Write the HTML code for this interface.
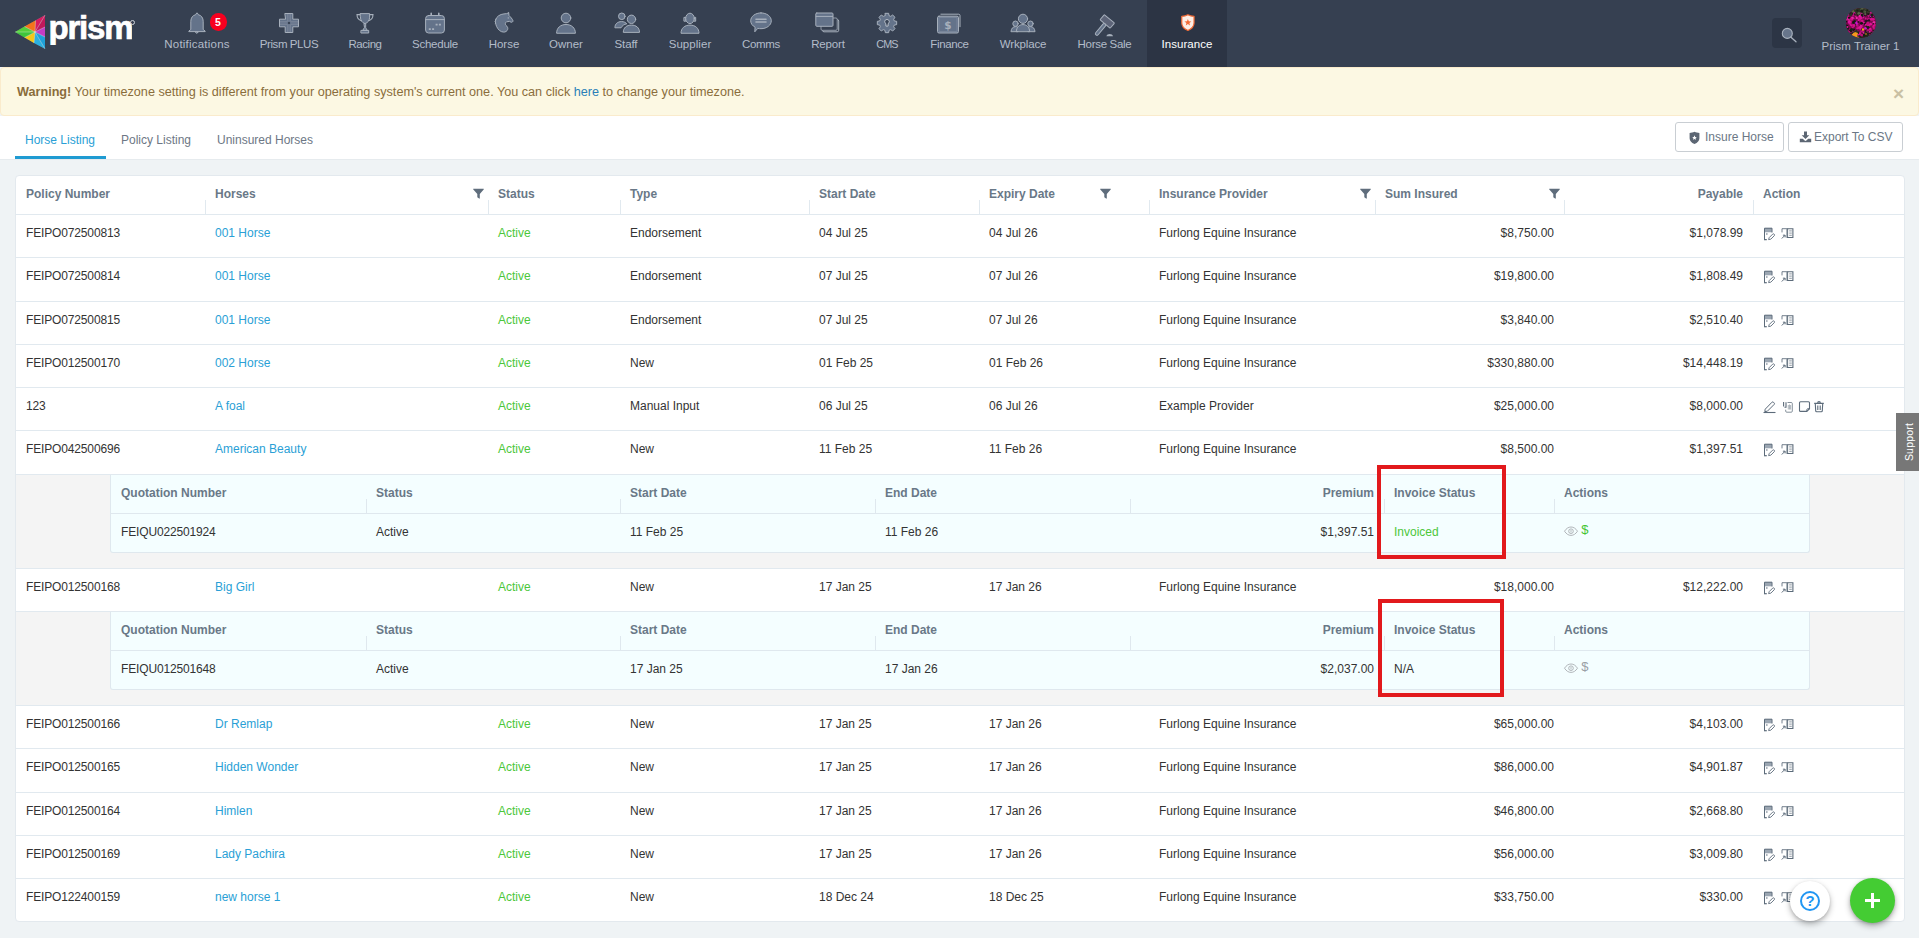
<!DOCTYPE html>
<html lang="en"><head><meta charset="utf-8"><title>Prism - Insurance</title>
<style>
*{box-sizing:border-box;margin:0;padding:0}
html,body{width:1919px;height:938px;overflow:hidden;background:#eff3f5}
body{font-family:"Liberation Sans",Arial,sans-serif;font-size:12px;color:#333;position:relative}
a{text-decoration:none;color:inherit}
.abs{position:absolute}
#nav{position:absolute;left:0;top:0;width:1919px;height:67px;background:#364051}
#nav .item{position:absolute;top:0;height:67px;text-align:center;color:#b3bcc9;font-size:11.5px;white-space:nowrap}
#nav .item .lbl{position:absolute;left:-50px;right:-50px;top:36px;line-height:16px;text-align:center}
#nav .item svg{position:absolute}
#nav .active{background:#2c3444;color:#fff}
#alert{position:absolute;left:0;top:67px;width:1919px;height:49px;background:#fcf8e3;border:1px solid #faebcc;border-radius:4px;color:#8a6d3b;font-size:12.65px}
#alert .txt{position:absolute;left:16px;top:15px;line-height:18px;white-space:nowrap}
#alert b{font-weight:bold}
#alert .lnk{color:#2a7fb8}
#tabs{position:absolute;left:0;top:116px;width:1919px;height:44px;background:#fff;border-bottom:1px solid #e6ebee}
.tab{position:absolute;top:0;height:43px;font-size:12px;color:#6d7785;white-space:nowrap;line-height:17px;padding-top:16px}
.tab.on{color:#2a9fd6}
.tab.on:after{content:"";position:absolute;left:-10px;right:-11px;bottom:0;height:3px;background:#1f9bd2}
.btn{position:absolute;top:6px;height:30px;border:1px solid #c9ced3;border-radius:3px;background:#fff;color:#6b7785;font-size:12px;line-height:17px;white-space:nowrap}
.btn .bl{position:absolute;top:6px}
#card{position:absolute;left:15px;top:175px;width:1890px;height:747px;background:#fff;border:1px solid #e3e9ee;border-radius:4px;overflow:hidden}
.row{position:absolute;left:0;width:1888px;border-top:1px solid #e1e9ef}
.c{position:absolute;top:0;white-space:nowrap;line-height:17px}
.row .c{padding-top:10px}
.hd .c{padding-top:11px;font-weight:bold;color:#697887}
.r{text-align:right}
.pn{letter-spacing:-.15px}
.lk{color:#2a9fd6}
.gr{color:#4cc73a}
.vd{position:absolute;width:1px;background:#e1e9ef}
.detail{position:absolute;left:0;width:1888px;background:#f4f4f4;border-top:1px solid #e1e9ef}
.inner{position:absolute;left:94px;top:0;width:1700px;height:78px;background:#f4feff;border:1px solid #dfe8ee;border-top:none;border-radius:0 0 3px 3px}
.inner .ih{position:absolute;left:0;top:0;width:1698px;height:39px;border-bottom:1px solid #dfe8ee}
.inner .c{padding-top:0}
.inner .ih .c{font-weight:bold;color:#697887;top:10px}
.inner .ir .c{top:49px}
.red{position:absolute;border:4px solid #e2191c}
.ico{position:absolute}
</style></head>
<body>
<div id="nav">
<svg class="abs" style="left:13px;top:13px" width="36" height="38" viewBox="0 0 36 38">
<polygon points="2,19 32,2 32,36" fill="#fff" opacity=".25"/>
<polygon points="22,19 32,2.200 22.500,7.500" fill="#d81b60"/>
<polygon points="22,19 32,2.200 32,14" fill="#c2185b"/>
<polygon points="22,19 32,14 32,24" fill="#c43cc4"/>
<polygon points="22,19 32,24 32,35.800" fill="#1ea0d8"/>
<polygon points="22,19 32,35.800 21,30" fill="#2bb0e0"/>
<polygon points="22,19 21,30 11.500,24.500" fill="#f4c81a"/>
<polygon points="22,19 11.500,24.500 2.200,19" fill="#3fc53a"/>
<polygon points="22,19 2.200,19 11.500,13.500" fill="#55cf3a"/>
<polygon points="22,19 11.500,13.500 22.500,7.500" fill="#f4731c"/>
<path d="M22 19L32 2.200M22 19L32 14M22 19L32 24M22 19L32 35.800M22 19L21 30M22 19L11.500 24.500M22 19L2.200 19M22 19L11.500 13.500M22 19L22.500 7.500" stroke="#fff" stroke-opacity=".55" stroke-width=".6"/>
</svg>
<div class="abs" style="left:48.5px;top:6px;height:39px;overflow:hidden;font-size:33px;line-height:43px;font-weight:bold;color:#fff;letter-spacing:-1.200px;-webkit-text-stroke:.7px #fff;white-space:nowrap">prism</div>
<div class="abs" style="left:130px;top:19.5px;width:5px;height:5px;border:1px solid #cfd4db;border-radius:50%"></div>
<div class="item" style="left:197px;width:0">
<svg class="abs" style="left:-12px;top:11px" width="24" height="28" viewBox="0 0 24 28" ><path fill="#64738a" stroke="#a7b0bc" stroke-width="1" stroke-linejoin="round" stroke-linecap="round" d="M12 2.3c.9 0 1.3.6 1.3 1.4 3 .6 4.9 3.2 4.9 6.6v8.2l2 1.6v.5H3.800v-.5l2-1.600V10.300c0-3.400 1.900-6 4.900-6.600 0-.8.400-1.400 1.300-1.400z"/><path fill="#64738a" stroke="#a7b0bc" stroke-width="1" stroke-linejoin="round" stroke-linecap="round" d="M10.600 20.800h2.800L12 22.200z"/></svg>
<div class="abs" style="left:12.500px;top:13px;width:17px;height:18px;border-radius:9px;background:#f8001f;color:#fff;font-weight:bold;font-size:10.500px;line-height:18px;text-align:center">5</div>
<div class="lbl" style="letter-spacing:0.22px;">Notifications</div>
</div>
<div class="item" style="left:289px;width:0">
<svg class="abs" style="left:-12px;top:11px" width="24" height="28" viewBox="0 0 24 28" ><path fill="#64738a" stroke="#a7b0bc" stroke-width="1" stroke-linejoin="round" stroke-linecap="round" d="M8.200 2.500h7.600v5.700h5.700v7.600h-5.700v5.700H8.200v-5.700H2.500V8.200h5.700z"/><path d="M10.500 3v7.500M12 3v7.500M13.500 3v7.500M10.500 13.500V21M12 13.500V21M13.500 13.500V21M3 10.500h7.500M3 12h7.500M3 13.500h7.500M13.500 10.500H21M13.500 12H21M13.500 13.500H21" stroke="#8893a3" stroke-width=".5" fill="none"/><circle cx="12" cy="12" r="1.100" fill="#2f3848"/></svg>
<div class="lbl" style="letter-spacing:-0.41px;">Prism PLUS</div>
</div>
<div class="item" style="left:365px;width:0">
<svg class="abs" style="left:-12px;top:11px" width="24" height="28" viewBox="0 0 24 28" ><path fill="#64738a" stroke="#a7b0bc" stroke-width="1" stroke-linejoin="round" stroke-linecap="round" d="M7.400 2.600h9.200v3.600c0 3.200-1.800 5.600-4.600 6.400-2.800-.8-4.600-3.200-4.600-6.400z"/><path d="M7.400 3.600H4c0 3.300 1.800 5.500 4.600 6.300M16.600 3.600H20c0 3.300-1.800 5.500-4.600 6.300" fill="none" stroke="#a7b0bc" stroke-width="1.100"/><path fill="#64738a" stroke="#a7b0bc" stroke-width="1" stroke-linejoin="round" stroke-linecap="round" d="M11.300 12.500h1.400v4.300l1.600 2.600H9.700l1.600-2.600zM8.300 19.400h7.400v2.600H8.300z"/></svg>
<div class="lbl" style="letter-spacing:-0.46px;">Racing</div>
</div>
<div class="item" style="left:435px;width:0">
<svg class="abs" style="left:-12px;top:11px" width="24" height="28" viewBox="0 0 24 28" ><path d="M8.200 2.300v3M15.800 2.300v3" stroke="#a7b0bc" stroke-width="1.600" stroke-linecap="round"/><rect fill="#64738a" stroke="#a7b0bc" stroke-width="1" stroke-linejoin="round" stroke-linecap="round" x="2.600" y="4.500" width="18.800" height="17.500" rx="3"/><path d="M2.600 8.600h18.800" stroke="#a7b0bc" stroke-width="1"/><path d="M12.600 12.700h2v1.700h-2zM15.900 12.700h2v1.700h-2zM5.800 17.200h2v1.700h-2zM9.100 17.200h2v1.700h-2z" fill="#a7b0bc"/></svg>
<div class="lbl" style="letter-spacing:-0.24px;">Schedule</div>
</div>
<div class="item" style="left:504px;width:0">
<svg class="abs" style="left:-12px;top:11px" width="24" height="28" viewBox="0 0 24 28" ><path fill="#64738a" stroke="#a7b0bc" stroke-width="1" stroke-linejoin="round" stroke-linecap="round" d="M16.700 1.900L17 4.500C18.500 6 20.300 7.800 21 9.800C21 10.800 20 11.500 19 11.200L17.500 10.400L14.500 10.800C13.200 11.800 13 13 13.800 14.200C15.500 15.500 16.200 17 15.600 18.600C15 20.200 13.500 21.100 11.700 21.100C8.500 21.100 6 18.500 4.600 15.500C3.600 13 3.200 11 3.600 9C4.500 5.500 8 3.200 12 2.900C13.800 2.800 15.500 2.600 16.700 1.900Z"/><circle cx="16.300" cy="6.900" r=".7" fill="#a7b0bc"/><path d="M4.200 8.500l-1.200-.3M3.700 10.500l-1.200 0M3.900 12.500l-1.100.3" stroke="#a7b0bc" stroke-width=".7"/></svg>
<div class="lbl" style="">Horse</div>
</div>
<div class="item" style="left:566px;width:0">
<svg class="abs" style="left:-12px;top:11px" width="24" height="28" viewBox="0 0 24 28" ><circle fill="#64738a" stroke="#a7b0bc" stroke-width="1" stroke-linejoin="round" stroke-linecap="round" cx="12" cy="7" r="4.800"/><path fill="#64738a" stroke="#a7b0bc" stroke-width="1" stroke-linejoin="round" stroke-linecap="round" d="M2.600 21.900c0-5 3.900-8.400 9.400-8.400s9.400 3.400 9.400 8.400z"/></svg>
<div class="lbl" style="">Owner</div>
</div>
<div class="item" style="left:626px;width:0">
<svg class="abs" style="left:-13px;top:11px" width="28" height="28" viewBox="0 0 28 28" ><circle fill="#64738a" stroke="#a7b0bc" stroke-width="1" stroke-linejoin="round" stroke-linecap="round" cx="8.800" cy="5.300" r="3.300"/><path fill="#64738a" stroke="#a7b0bc" stroke-width="1" stroke-linejoin="round" stroke-linecap="round" d="M1.900 16.400c0-3.500 2.700-5.800 6.600-5.800 2.300 0 4.100.8 5.300 2.200-2.700.5-4.600 1.800-5.500 3.600z"/><circle fill="#64738a" stroke="#a7b0bc" stroke-width="1" stroke-linejoin="round" stroke-linecap="round" cx="18.500" cy="8.300" r="4.200"/><path fill="#64738a" stroke="#a7b0bc" stroke-width="1" stroke-linejoin="round" stroke-linecap="round" d="M10.300 21c0-4.200 3.300-6.900 8.100-6.900s8.100 2.700 8.100 6.900z"/></svg>
<div class="lbl" style="letter-spacing:-0.1px;">Staff</div>
</div>
<div class="item" style="left:690px;width:0">
<svg class="abs" style="left:-12px;top:11px" width="24" height="28" viewBox="0 0 24 28" ><path fill="#64738a" stroke="#a7b0bc" stroke-width="1" stroke-linejoin="round" stroke-linecap="round" d="M6.300 6.400h1.500v3.800H6.300zM16.200 6.400h1.500v3.800h-1.500z"/><ellipse fill="#64738a" stroke="#a7b0bc" stroke-width="1" stroke-linejoin="round" stroke-linecap="round" cx="12" cy="7.400" rx="4.300" ry="5.200"/><path fill="#64738a" stroke="#a7b0bc" stroke-width="1" stroke-linejoin="round" stroke-linecap="round" d="M3 21.900c0-4.700 3.700-7.800 9-7.800s9 3.100 9 7.800z"/></svg>
<div class="lbl" style="letter-spacing:0.06px;">Supplier</div>
</div>
<div class="item" style="left:761px;width:0">
<svg class="abs" style="left:-12px;top:11px" width="24" height="28" viewBox="0 0 24 28" ><path fill="#64738a" stroke="#a7b0bc" stroke-width="1" stroke-linejoin="round" stroke-linecap="round" d="M12 1.900c5.700 0 10.300 3.500 10.300 7.900s-4.600 7.900-10.300 7.900c-1.100 0-2.200-.1-3.200-.4L5.800 20.800l.3-4.600C3.400 14.800 1.700 12.400 1.700 9.800c0-4.400 4.600-7.900 10.300-7.900z"/><path d="M7 8.200h10M7 11h10" stroke="#a7b0bc" stroke-width="1.600" stroke-linecap="round"/></svg>
<div class="lbl" style="letter-spacing:-0.35px;">Comms</div>
</div>
<div class="item" style="left:828px;width:0">
<svg class="abs" style="left:-13px;top:11px" width="28" height="28" viewBox="0 0 28 28" ><rect x="7.500" y="8.500" width="16.200" height="12.300" rx="1.500" fill="none" stroke="#a7b0bc" stroke-width="1"/><rect x="6" y="7" width="16.200" height="12.300" rx="1.200" fill="#364051" stroke="#a7b0bc" stroke-width=".8"/><rect fill="#64738a" stroke="#a7b0bc" stroke-width="1" stroke-linejoin="round" stroke-linecap="round" x=".8" y="2" width="17.200" height="13.300" rx="1"/><path d="M.8 5.400h17.200" stroke="#a7b0bc" stroke-width="1"/></svg>
<div class="lbl" style="letter-spacing:-0.16px;">Report</div>
</div>
<div class="item" style="left:887px;width:0">
<svg class="abs" style="left:-12px;top:11px" width="24" height="28" viewBox="0 0 24 28" ><path fill="#64738a" stroke="#a7b0bc" stroke-width="1" stroke-linejoin="round" stroke-linecap="round" d="M10.34 2.34L13.66 2.34L14.03 4.68L15.75 5.39L17.66 4.00L20.00 6.34L18.61 8.25L19.32 9.97L21.66 10.34L21.66 13.66L19.32 14.03L18.61 15.75L20.00 17.66L17.66 20.00L15.75 18.61L14.03 19.32L13.66 21.66L10.34 21.66L9.97 19.32L8.25 18.61L6.34 20.00L4.00 17.66L5.39 15.75L4.68 14.03L2.34 13.66L2.34 10.34L4.68 9.97L5.39 8.25L4.00 6.34L6.34 4.00L8.25 5.39L9.97 4.68z"/><path d="M12 8.500c1.400 0 2.300 1 2.300 2.200 0 .9-.5 1.600-1.200 2v2.400h-2.200v-2.400c-.7-.4-1.200-1.100-1.200-2 0-1.200.9-2.200 2.300-2.200z" fill="#3a4557" stroke="#c3cad3" stroke-width=".9"/><circle cx="12" cy="10.800" r=".1" fill="#64738a"/></svg>
<div class="lbl" style="letter-spacing:-0.9px;font-size:10.800px;">CMS</div>
</div>
<div class="item" style="left:949.5px;width:0">
<svg class="abs" style="left:-14px;top:11px" width="28" height="28" viewBox="0 0 28 28" ><path d="M4.500 3.200h18.300c.7 0 1.200.5 1.200 1.200v11.700" fill="none" stroke="#a7b0bc" stroke-width="1"/><rect fill="#64738a" stroke="#a7b0bc" stroke-width="1" stroke-linejoin="round" stroke-linecap="round" x="1.500" y="5.200" width="21" height="16.800" rx="1.500"/><rect x="3" y="6.700" width="18" height="13.800" fill="none" stroke="#8592a4" stroke-width=".6"/><text x="12" y="18.300" text-anchor="middle" font-family="DejaVu Sans,Liberation Sans,sans-serif" font-weight="bold" font-size="10.500" fill="#a7b0bc">$</text></svg>
<div class="lbl" style="letter-spacing:-0.38px;">Finance</div>
</div>
<div class="item" style="left:1023px;width:0">
<svg class="abs" style="left:-13px;top:11px" width="28" height="28" viewBox="0 0 28 28" ><circle fill="#64738a" stroke="#a7b0bc" stroke-width="1" stroke-linejoin="round" stroke-linecap="round" cx="5.500" cy="12.700" r="2.700"/><circle fill="#64738a" stroke="#a7b0bc" stroke-width="1" stroke-linejoin="round" stroke-linecap="round" cx="20.500" cy="12.700" r="2.700"/><path fill="#64738a" stroke="#a7b0bc" stroke-width="1" stroke-linejoin="round" stroke-linecap="round" d="M1 20.300c.3-3 2.100-4.700 4.600-4.700 1.500 0 2.800.7 3.500 1.900l-1 2.800zM25 20.300c-.3-3-2.100-4.700-4.600-4.700-1.500 0-2.800.7-3.500 1.900l1 2.800z"/><circle fill="#64738a" stroke="#a7b0bc" stroke-width="1" stroke-linejoin="round" stroke-linecap="round" cx="13" cy="7.800" r="4.600"/><path fill="#64738a" stroke="#a7b0bc" stroke-width="1" stroke-linejoin="round" stroke-linecap="round" d="M6.300 20.300c.3-4.200 3-6.700 6.700-6.700s6.400 2.500 6.700 6.700z"/></svg>
<div class="lbl" style="letter-spacing:-0.14px;">Wrkplace</div>
</div>
<div class="item" style="left:1104.5px;width:0">
<svg class="abs" style="left:-12px;top:11px" width="24" height="28" viewBox="0 0 24 28" ><g transform="translate(-1 2.300) rotate(40 12 12)"><rect  stroke="#a7b0bc" stroke-width="1" stroke-linejoin="round" stroke-linecap="round" x="5.400" y="3.600" width="13.200" height="6.700" rx=".6" fill="#5d6478"/><rect fill="#64738a" stroke="#a7b0bc" stroke-width="1" stroke-linejoin="round" stroke-linecap="round" x="10.400" y="10.300" width="3.200" height="14.200" rx="1.500"/></g><path d="M13.400 25.300c.4-1.500 1.600-2.200 3.300-2.200s2.900.7 3.300 2.200z" fill="#a7b0bc"/></svg>
<div class="lbl" style="letter-spacing:-0.31px;">Horse Sale</div>
</div>
<div class="item active" style="left:1147px;width:80px">
<svg class="abs" style="left:28px;top:11px" width="24" height="28" viewBox="0 0 24 28" ><g transform="translate(12.900 11.700) scale(.93) translate(-12 -11.300)"><path d="M12 2.800c2 1.100 4.300 1.600 6.600 1.600v7.200c0 3.600-2.400 6.200-6.600 8.100-4.200-1.900-6.600-4.500-6.600-8.100V4.400c2.300 0 4.600-.5 6.600-1.600z" fill="#fdeee6" stroke="#f26a35" stroke-width="1.300" stroke-linejoin="round"/><path d="M12 7.200l1 2.500 2.700.2-2.100 1.700.7 2.600L12 12.800l-2.300 1.400.7-2.600-2.100-1.700 2.700-.2z" fill="#f26a35"/></g></svg>
<div class="lbl" style="left:0;right:0;letter-spacing:0.08px;">Insurance</div>
</div>
<div class="abs" style="left:1772px;top:18px;width:30px;height:30px;border-radius:4px;background:#2c3545"><svg class="abs" style="left:7px;top:8px" width="20" height="18" viewBox="0 0 20 18"><circle cx="8.300" cy="7.400" r="5" fill="#67758b" stroke="#a9b2be" stroke-width="1.100"/><path d="M12 11.200l5 4.500" stroke="#a9b2be" stroke-width="1.300" stroke-linecap="round"/></svg></div>
<svg class="abs" style="left:1846px;top:7.500px" width="30" height="30" viewBox="0 0 30 30"><defs><clipPath id="av"><circle cx="15" cy="15" r="15"/></clipPath></defs><g clip-path="url(#av)"><rect width="30" height="30" fill="#7a0a4e"/><rect width="30" height="6" fill="#2a3020"/><rect y="24" width="30" height="6" fill="#22261a"/><circle cx="9.7" cy="8.3" r="0.9" fill="#d4108c"/><circle cx="16.1" cy="13.0" r="1.6" fill="#d4108c"/><circle cx="6.4" cy="6.9" r="0.9" fill="#1c1f16"/><circle cx="2.7" cy="14.3" r="0.9" fill="#c913d0"/><circle cx="6.7" cy="18.8" r="1.3" fill="#d4108c"/><circle cx="11.9" cy="26.5" r="1.3" fill="#d4108c"/><circle cx="4.0" cy="14.2" r="0.9" fill="#2a1020"/><circle cx="9.3" cy="23.0" r="0.9" fill="#c00d7c"/><circle cx="17.1" cy="9.1" r="1.3" fill="#e0139a"/><circle cx="1.9" cy="6.3" r="1.2" fill="#ea2aa8"/><circle cx="16.0" cy="22.1" r="1.3" fill="#14160f"/><circle cx="13.6" cy="11.6" r="1.4" fill="#c00d7c"/><circle cx="7.3" cy="17.6" r="1.2" fill="#2a1020"/><circle cx="10.3" cy="14.9" r="1.7" fill="#c913d0"/><circle cx="3.5" cy="14.2" r="0.9" fill="#d81593"/><circle cx="14.7" cy="5.9" r="1.5" fill="#e0139a"/><circle cx="17.2" cy="24.3" r="1.1" fill="#d81593"/><circle cx="10.5" cy="15.9" r="0.9" fill="#14160f"/><circle cx="2.8" cy="10.9" r="0.9" fill="#e0139a"/><circle cx="21.0" cy="19.2" r="1.1" fill="#14160f"/><circle cx="11.6" cy="19.7" r="1.6" fill="#d4108c"/><circle cx="10.7" cy="18.4" r="0.9" fill="#14160f"/><circle cx="23.0" cy="7.8" r="1.2" fill="#ea2aa8"/><circle cx="27.5" cy="15.9" r="1.2" fill="#c00d7c"/><circle cx="16.5" cy="24.4" r="1.6" fill="#1c1f16"/><circle cx="8.4" cy="14.1" r="1.4" fill="#d81593"/><circle cx="11.4" cy="10.1" r="1.0" fill="#e0139a"/><circle cx="7.0" cy="10.1" r="1.5" fill="#14160f"/><circle cx="5.5" cy="11.2" r="1.2" fill="#c00d7c"/><circle cx="11.1" cy="17.5" r="1.4" fill="#c00d7c"/><circle cx="15.5" cy="18.6" r="1.2" fill="#d4108c"/><circle cx="26.1" cy="25.9" r="1.2" fill="#2a1020"/><circle cx="12.0" cy="7.3" r="0.9" fill="#1c1f16"/><circle cx="2.0" cy="9.6" r="0.9" fill="#c00d7c"/><circle cx="18.0" cy="7.3" r="0.9" fill="#c913d0"/><circle cx="3.0" cy="13.0" r="0.9" fill="#d4108c"/><circle cx="6.2" cy="13.3" r="1.7" fill="#b50a70"/><circle cx="18.1" cy="15.4" r="1.6" fill="#e0139a"/><circle cx="29.8" cy="15.3" r="1.1" fill="#14160f"/><circle cx="4.3" cy="21.5" r="1.2" fill="#b50a70"/><circle cx="20.8" cy="16.4" r="1.7" fill="#ea2aa8"/><circle cx="15.8" cy="8.2" r="1.6" fill="#2a1020"/><circle cx="22.7" cy="11.6" r="1.4" fill="#e0139a"/><circle cx="7.8" cy="13.1" r="1.1" fill="#c00d7c"/><circle cx="6.7" cy="16.9" r="1.1" fill="#2a1020"/><circle cx="6.7" cy="22.9" r="1.5" fill="#ea2aa8"/><circle cx="24.5" cy="21.3" r="1.0" fill="#ea2aa8"/><circle cx="14.8" cy="21.1" r="1.5" fill="#d4108c"/><circle cx="14.2" cy="9.3" r="1.7" fill="#c913d0"/><circle cx="13.4" cy="25.6" r="1.7" fill="#d81593"/><circle cx="10.9" cy="9.9" r="1.2" fill="#ea2aa8"/><circle cx="10.1" cy="15.6" r="1.6" fill="#c913d0"/><circle cx="14.4" cy="19.4" r="1.6" fill="#e0139a"/><circle cx="3.6" cy="13.5" r="1.2" fill="#ea2aa8"/><circle cx="5.4" cy="22.4" r="0.9" fill="#d81593"/><circle cx="28.4" cy="20.9" r="1.2" fill="#14160f"/><circle cx="28.4" cy="20.9" r="1.7" fill="#c00d7c"/><circle cx="0.8" cy="18.0" r="1.5" fill="#14160f"/><circle cx="4.4" cy="23.2" r="1.4" fill="#14160f"/><circle cx="10.5" cy="17.1" r="0.8" fill="#c00d7c"/><circle cx="24.0" cy="21.0" r="1.3" fill="#e0139a"/><circle cx="28.0" cy="14.5" r="1.5" fill="#ea2aa8"/><circle cx="6.3" cy="10.5" r="1.3" fill="#b50a70"/><circle cx="22.9" cy="12.2" r="1.2" fill="#2a1020"/><circle cx="3.9" cy="25.0" r="1.6" fill="#d81593"/><circle cx="19.9" cy="22.9" r="1.2" fill="#2a1020"/><circle cx="27.5" cy="16.0" r="0.9" fill="#2a1020"/><circle cx="15.3" cy="24.2" r="1.3" fill="#c00d7c"/><circle cx="23.3" cy="8.3" r="1.2" fill="#c00d7c"/><circle cx="21.8" cy="17.2" r="1.4" fill="#d81593"/><circle cx="15.9" cy="15.6" r="1.6" fill="#e0139a"/><circle cx="1.7" cy="9.2" r="1.5" fill="#d4108c"/><circle cx="15.2" cy="17.4" r="1.2" fill="#e0139a"/><circle cx="18.4" cy="16.1" r="1.0" fill="#2a1020"/><circle cx="8.3" cy="16.2" r="1.3" fill="#14160f"/><circle cx="7.4" cy="16.5" r="1.6" fill="#b50a70"/><circle cx="26.8" cy="9.5" r="0.9" fill="#14160f"/><circle cx="3.6" cy="14.7" r="1.4" fill="#e0139a"/><circle cx="12.9" cy="9.7" r="1.5" fill="#b50a70"/><circle cx="26.9" cy="8.4" r="0.9" fill="#d81593"/><circle cx="26.5" cy="26.3" r="1.5" fill="#ea2aa8"/><circle cx="2.8" cy="24.5" r="1.7" fill="#c00d7c"/><circle cx="25.0" cy="8.6" r="1.7" fill="#1c1f16"/><circle cx="12.1" cy="14.3" r="1.1" fill="#d81593"/><circle cx="21.7" cy="5.4" r="1.2" fill="#2a1020"/><circle cx="21.1" cy="13.5" r="1.4" fill="#2a1020"/><circle cx="15.4" cy="6.4" r="1.7" fill="#ea2aa8"/><circle cx="3.1" cy="10.8" r="1.6" fill="#d4108c"/><circle cx="5.4" cy="21.6" r="1.6" fill="#1c1f16"/><circle cx="20.3" cy="25.8" r="0.9" fill="#1c1f16"/><circle cx="27.6" cy="17.6" r="0.9" fill="#d81593"/><circle cx="1.7" cy="20.1" r="1.6" fill="#1c1f16"/><circle cx="8.1" cy="5.4" r="1.5" fill="#e0139a"/><circle cx="2.5" cy="23.8" r="1.0" fill="#e0139a"/><circle cx="3.7" cy="5.3" r="1.2" fill="#2a1020"/><circle cx="27.5" cy="18.7" r="1.3" fill="#d4108c"/><circle cx="7.2" cy="7.4" r="1.0" fill="#c00d7c"/><circle cx="5.4" cy="25.5" r="1.3" fill="#b50a70"/><circle cx="6.2" cy="14.8" r="1.0" fill="#c00d7c"/><circle cx="24.1" cy="26.9" r="0.8" fill="#d4108c"/><circle cx="22.0" cy="17.1" r="1.3" fill="#ea2aa8"/><circle cx="7.4" cy="14.8" r="1.4" fill="#1c1f16"/><circle cx="16.4" cy="24.6" r="1.1" fill="#2a1020"/><circle cx="6.5" cy="10.1" r="1.5" fill="#ea2aa8"/><circle cx="21.2" cy="19.0" r="1.7" fill="#1c1f16"/><circle cx="29.5" cy="23.4" r="0.9" fill="#d4108c"/><circle cx="22.2" cy="10.6" r="0.8" fill="#c00d7c"/><circle cx="20.0" cy="13.4" r="1.4" fill="#2a1020"/><circle cx="8.5" cy="10.3" r="0.8" fill="#b50a70"/><circle cx="5.6" cy="10.9" r="1.0" fill="#d4108c"/><circle cx="28.9" cy="26.4" r="1.1" fill="#2a1020"/><circle cx="1.0" cy="24.4" r="1.1" fill="#ea2aa8"/><circle cx="0.0" cy="13.4" r="1.1" fill="#14160f"/><circle cx="19.7" cy="10.5" r="0.9" fill="#d4108c"/><circle cx="24.5" cy="8.2" r="0.8" fill="#c913d0"/><circle cx="0.7" cy="11.7" r="0.9" fill="#ea2aa8"/><circle cx="28.7" cy="23.8" r="1.4" fill="#c00d7c"/><circle cx="21.5" cy="24.3" r="1.5" fill="#1c1f16"/><circle cx="21.6" cy="15.9" r="1.5" fill="#b50a70"/><circle cx="19.3" cy="6.0" r="1.4" fill="#2a1020"/><circle cx="22.0" cy="22.9" r="1.6" fill="#c00d7c"/><circle cx="22.6" cy="17.5" r="1.5" fill="#d4108c"/><circle cx="17.5" cy="24.6" r="0.9" fill="#ea2aa8"/><circle cx="1.3" cy="19.0" r="1.1" fill="#e0139a"/><circle cx="13.5" cy="6.1" r="1.4" fill="#d4108c"/><circle cx="20.4" cy="15.8" r="1.2" fill="#d4108c"/><circle cx="2.1" cy="25.5" r="0.9" fill="#2a1020"/><circle cx="15.8" cy="21.4" r="1.0" fill="#14160f"/><circle cx="2.2" cy="10.8" r="1.0" fill="#ea2aa8"/><circle cx="19.5" cy="15.1" r="0.9" fill="#1c1f16"/><circle cx="27.3" cy="11.3" r="1.4" fill="#d4108c"/><circle cx="19.3" cy="6.7" r="1.1" fill="#c00d7c"/><circle cx="19.5" cy="20.2" r="1.3" fill="#c913d0"/><circle cx="0.4" cy="6.3" r="1.7" fill="#b50a70"/><circle cx="3.0" cy="9.8" r="1.1" fill="#14160f"/><circle cx="15.5" cy="15.2" r="1.5" fill="#14160f"/><circle cx="29.8" cy="17.1" r="1.7" fill="#b50a70"/><circle cx="28.1" cy="5.4" r="0.9" fill="#14160f"/><circle cx="15.2" cy="26.9" r="1.1" fill="#b50a70"/><circle cx="27.5" cy="25.5" r="1.3" fill="#e0139a"/><circle cx="4.3" cy="16.5" r="0.9" fill="#d81593"/><circle cx="24.6" cy="16.2" r="1.4" fill="#e0139a"/><circle cx="6.9" cy="24.7" r="1.2" fill="#14160f"/><circle cx="4.8" cy="25.9" r="1.2" fill="#14160f"/><circle cx="21.8" cy="14.2" r="1.1" fill="#1c1f16"/><circle cx="25.2" cy="5.0" r="1.6" fill="#d81593"/><circle cx="3.6" cy="25.4" r="1.6" fill="#d4108c"/><circle cx="8.7" cy="13.2" r="1.2" fill="#1c1f16"/><circle cx="26.1" cy="6.7" r="1.5" fill="#1c1f16"/><circle cx="25.6" cy="11.2" r="1.6" fill="#d4108c"/><circle cx="8.6" cy="25.6" r="1.7" fill="#ea2aa8"/><circle cx="13.1" cy="11.9" r="1.5" fill="#d81593"/><circle cx="12.8" cy="5.6" r="1.6" fill="#1c1f16"/><circle cx="28.2" cy="17.1" r="0.8" fill="#e0139a"/><circle cx="22.0" cy="14.9" r="1.4" fill="#c00d7c"/><circle cx="8.6" cy="6.1" r="0.9" fill="#2a1020"/><circle cx="14.2" cy="12.6" r="1.0" fill="#b50a70"/><circle cx="22.2" cy="19.4" r="1.4" fill="#1c1f16"/><circle cx="9.0" cy="17.3" r="0.9" fill="#1c1f16"/><circle cx="19.3" cy="6.7" r="1.6" fill="#2a1020"/><circle cx="14.9" cy="9.8" r="1.7" fill="#d81593"/><circle cx="13.5" cy="8.1" r="1.0" fill="#ea2aa8"/><circle cx="5.2" cy="17.2" r="1.0" fill="#d81593"/><circle cx="7.8" cy="17.5" r="1.5" fill="#d4108c"/><circle cx="12.4" cy="14.1" r="1.0" fill="#2a1020"/><circle cx="8.1" cy="21.5" r="1.0" fill="#14160f"/><circle cx="29.0" cy="7.8" r="1.3" fill="#2a1020"/><circle cx="23.7" cy="23.7" r="1.0" fill="#e0139a"/><circle cx="7.5" cy="13.8" r="1.2" fill="#14160f"/><circle cx="9.4" cy="22.9" r="0.9" fill="#d4108c"/><circle cx="12.8" cy="5.3" r="1.4" fill="#5a6548"/><circle cx="14.7" cy="0.5" r="1.3" fill="#303828"/><circle cx="29.2" cy="1.7" r="0.9" fill="#2b3322"/><circle cx="4.6" cy="6.8" r="1.4" fill="#2b3322"/><circle cx="21.7" cy="4.5" r="0.8" fill="#5a6548"/><circle cx="23.3" cy="0.0" r="0.9" fill="#454d36"/><circle cx="27.6" cy="4.5" r="1.4" fill="#1a1d14"/><circle cx="18.8" cy="3.7" r="1.2" fill="#5a6548"/><circle cx="3.4" cy="0.5" r="1.4" fill="#303828"/><circle cx="5.8" cy="1.8" r="0.7" fill="#303828"/><circle cx="16.1" cy="7.0" r="1.4" fill="#1a1d14"/><circle cx="19.3" cy="6.2" r="1.1" fill="#5a6548"/><circle cx="16.4" cy="0.2" r="1.2" fill="#5a6548"/><circle cx="9.2" cy="0.2" r="1.3" fill="#5a6548"/><circle cx="19.4" cy="0.6" r="1.2" fill="#454d36"/><circle cx="27.8" cy="1.6" r="1.2" fill="#2b3322"/><circle cx="21.5" cy="2.5" r="0.8" fill="#5a6548"/><circle cx="23.9" cy="5.2" r="0.7" fill="#303828"/><circle cx="14.9" cy="1.4" r="0.9" fill="#454d36"/><circle cx="6.6" cy="5.3" r="0.8" fill="#1a1d14"/><circle cx="18.7" cy="4.3" r="1.0" fill="#454d36"/><circle cx="27.3" cy="0.4" r="0.8" fill="#303828"/><circle cx="11.8" cy="1.5" r="0.8" fill="#303828"/><circle cx="1.6" cy="0.4" r="1.0" fill="#5a6548"/><circle cx="21.4" cy="2.2" r="1.4" fill="#2b3322"/><circle cx="27.9" cy="2.3" r="1.2" fill="#454d36"/><circle cx="15.7" cy="3.3" r="1.2" fill="#1a1d14"/><circle cx="11.4" cy="2.6" r="1.0" fill="#1a1d14"/><circle cx="3.3" cy="0.5" r="0.9" fill="#2b3322"/><circle cx="28.7" cy="0.9" r="1.0" fill="#454d36"/><circle cx="23.1" cy="2.2" r="0.8" fill="#5a6548"/><circle cx="21.2" cy="1.4" r="1.3" fill="#303828"/><circle cx="5.8" cy="2.5" r="0.7" fill="#5a6548"/><circle cx="12.3" cy="5.7" r="0.7" fill="#5a6548"/><circle cx="1.0" cy="0.4" r="0.9" fill="#2b3322"/><circle cx="22.4" cy="6.3" r="1.0" fill="#1a1d14"/><circle cx="10.0" cy="6.7" r="0.9" fill="#2b3322"/><circle cx="21.5" cy="2.2" r="0.9" fill="#1a1d14"/><circle cx="21.6" cy="4.2" r="0.7" fill="#2b3322"/><circle cx="7.0" cy="3.3" r="1.4" fill="#5a6548"/><circle cx="11.6" cy="24.0" r="1.4" fill="#c00d7c"/><circle cx="4.0" cy="26.0" r="1.3" fill="#1a1d14"/><circle cx="22.2" cy="28.6" r="1.2" fill="#2b3322"/><circle cx="9.8" cy="24.6" r="1.3" fill="#20251a"/><circle cx="17.9" cy="26.1" r="1.3" fill="#c00d7c"/><circle cx="7.4" cy="22.5" r="1.1" fill="#1a1d14"/><circle cx="16.3" cy="23.3" r="1.4" fill="#c00d7c"/><circle cx="29.6" cy="24.1" r="0.9" fill="#1a1d14"/><circle cx="12.6" cy="29.9" r="0.8" fill="#c00d7c"/><circle cx="4.0" cy="25.7" r="1.3" fill="#2b3322"/><circle cx="25.4" cy="27.3" r="1.3" fill="#1a1d14"/><circle cx="8.8" cy="24.2" r="1.0" fill="#20251a"/><circle cx="22.1" cy="23.6" r="0.8" fill="#2b3322"/><circle cx="7.1" cy="24.3" r="0.9" fill="#3a4230"/><circle cx="1.9" cy="24.0" r="1.1" fill="#2b3322"/><circle cx="6.9" cy="28.5" r="1.5" fill="#c00d7c"/><circle cx="3.1" cy="25.8" r="1.4" fill="#2b3322"/><circle cx="27.4" cy="22.3" r="0.9" fill="#20251a"/><circle cx="1.5" cy="26.8" r="0.9" fill="#3a4230"/><circle cx="2.3" cy="26.1" r="1.1" fill="#2b3322"/><circle cx="7.8" cy="28.2" r="0.8" fill="#1a1d14"/><circle cx="17.9" cy="27.0" r="0.7" fill="#2b3322"/><circle cx="10.2" cy="22.4" r="0.7" fill="#20251a"/><circle cx="22.0" cy="29.3" r="1.4" fill="#1a1d14"/><circle cx="12.3" cy="25.0" r="0.9" fill="#3a4230"/><circle cx="6.1" cy="28.4" r="1.1" fill="#3a4230"/><circle cx="12.2" cy="28.4" r="0.8" fill="#3a4230"/><circle cx="16.0" cy="27.2" r="1.3" fill="#c00d7c"/><circle cx="12.3" cy="24.3" r="1.0" fill="#20251a"/><circle cx="1.5" cy="28.0" r="1.0" fill="#20251a"/><circle cx="0.5" cy="28.1" r="1.2" fill="#20251a"/><circle cx="11.7" cy="25.2" r="1.0" fill="#1a1d14"/><circle cx="4.7" cy="22.9" r="1.0" fill="#1a1d14"/><circle cx="26.5" cy="25.7" r="0.8" fill="#2b3322"/><circle cx="1.6" cy="23.1" r="0.8" fill="#c00d7c"/><circle cx="18.7" cy="25.0" r="0.8" fill="#3a4230"/><circle cx="10.4" cy="23.3" r="1.4" fill="#2b3322"/><circle cx="3.3" cy="25.9" r="0.9" fill="#2b3322"/><circle cx="25.1" cy="22.3" r="1.0" fill="#c00d7c"/><circle cx="18.2" cy="27.1" r="1.4" fill="#1a1d14"/><path d="M5 27l4-3 3 1-1 3 2 2-5 .5z" fill="#f39a1d"/><circle cx="17" cy="21.500" r="1.200" fill="#f3a01d"/><circle cx="20" cy="26" r=".8" fill="#f39a1d"/></g></svg>
<div class="abs" style="left:1800px;width:121px;top:38px;line-height:16px;text-align:center;color:#b3bcc9;font-size:11.500px;white-space:nowrap">Prism Trainer 1</div>
</div>
<div id="alert"><div class="txt"><b>Warning!</b> Your timezone setting is different from your operating system's current one. You can click <span class="lnk">here</span> to change your timezone.</div><div class="abs" style="left:1888.5px;top:15px;width:18px;height:22px;line-height:22px;font-size:19px;font-weight:bold;color:#c9c0a3;text-align:center">×</div></div>
<div id="tabs">
<div class="tab on" style="left:25px">Horse Listing</div>
<div class="tab" style="left:121px">Policy Listing</div>
<div class="tab" style="left:217px">Uninsured Horses</div>
<div class="btn" style="left:1675px;width:109px"><svg class="abs" style="left:12px;top:8px" width="13" height="14" viewBox="0 0 13 14"><path d="M6.500.800c1.500.800 3.200 1.100 4.900 1.100v5.300c0 2.500-1.700 4.400-4.900 5.900C3.300 11.600 1.600 9.700 1.600 7.200V1.900c1.700 0 3.400-.3 4.900-1.100z" fill="#5c6673"/><path d="M6.500 4.300l.7 1.600 1.700.1-1.300 1.100.4 1.700-1.500-.9-1.500.9.400-1.700-1.300-1.100 1.700-.1z" fill="#fff"/></svg><span class="bl" style="left:29px">Insure Horse</span></div>
<div class="btn" style="left:1788px;width:115px"><svg class="abs" style="left:10px;top:8px" width="13" height="12" viewBox="0 0 13 12"><path d="M5 .500h3v3.800h2.300L6.500 8 2.700 4.300H5z" fill="#5c6673"/><path d="M.800 7.800h3l1.800 1.700c.5.500 1.300.5 1.800 0l1.800-1.700h3v3.400H.800z" fill="#5c6673"/></svg><span class="bl" style="left:25px">Export To CSV</span></div>
</div>
<div id="card">
<div class="row hd" style="top:-1px;height:39px;border-top:none">
<div class="c" style="left:10px">Policy Number</div>
<div class="c" style="left:199px">Horses</div>
<div class="c" style="left:482px">Status</div>
<div class="c" style="left:614px">Type</div>
<div class="c" style="left:803px">Start Date</div>
<div class="c" style="left:973px">Expiry Date</div>
<div class="c" style="left:1143px">Insurance Provider</div>
<div class="c" style="left:1369px">Sum Insured</div>
<div class="c r" style="left:1548px;width:179px">Payable</div>
<div class="c" style="left:1747px">Action</div>
<div class="vd" style="left:189px;top:25px;height:15px"></div>
<div class="vd" style="left:472px;top:25px;height:15px"></div>
<div class="vd" style="left:604px;top:25px;height:15px"></div>
<div class="vd" style="left:793px;top:25px;height:15px"></div>
<div class="vd" style="left:963px;top:25px;height:15px"></div>
<div class="vd" style="left:1133px;top:25px;height:15px"></div>
<div class="vd" style="left:1359px;top:25px;height:15px"></div>
<div class="vd" style="left:1548px;top:25px;height:15px"></div>
<div class="vd" style="left:1737px;top:25px;height:15px"></div>
<svg class="abs" style="left:457px;top:13px" width="11" height="11" viewBox="0 0 11 11"><path d="M.6.800h9.800c.4 0 .6.500.3.800L6.800 5.900v4.300c0 .4-.4.600-.7.400L4.600 9.500c-.2-.1-.3-.3-.3-.5V5.900L.3 1.600C0 1.300.2.800.6.800z" fill="#5f6d7c"/></svg><svg class="abs" style="left:1084px;top:13px" width="11" height="11" viewBox="0 0 11 11"><path d="M.6.800h9.800c.4 0 .6.500.3.800L6.800 5.900v4.300c0 .4-.4.600-.7.400L4.600 9.500c-.2-.1-.3-.3-.3-.5V5.900L.3 1.600C0 1.300.2.800.6.800z" fill="#5f6d7c"/></svg><svg class="abs" style="left:1344px;top:13px" width="11" height="11" viewBox="0 0 11 11"><path d="M.6.800h9.800c.4 0 .6.500.3.800L6.800 5.900v4.300c0 .4-.4.600-.7.400L4.600 9.500c-.2-.1-.3-.3-.3-.5V5.900L.3 1.600C0 1.300.2.800.6.800z" fill="#5f6d7c"/></svg><svg class="abs" style="left:1533px;top:13px" width="11" height="11" viewBox="0 0 11 11"><path d="M.6.800h9.800c.4 0 .6.500.3.800L6.800 5.900v4.300c0 .4-.4.600-.7.400L4.600 9.500c-.2-.1-.3-.3-.3-.5V5.900L.3 1.600C0 1.300.2.800.6.800z" fill="#5f6d7c"/></svg>
</div>
<div class="row" style="top:38px;height:43px">
<div class="c pn" style="left:10px">FEIPO072500813</div>
<div class="c lk" style="left:199px">001 Horse</div>
<div class="c gr" style="left:482px">Active</div>
<div class="c" style="left:614px">Endorsement</div>
<div class="c" style="left:803px">04 Jul 25</div>
<div class="c" style="left:973px">04 Jul 26</div>
<div class="c" style="left:1143px">Furlong Equine Insurance</div>
<div class="c r" style="left:1359px;width:179px">$8,750.00</div>
<div class="c r" style="left:1548px;width:179px">$1,078.99</div>
<svg class="abs" style="left:1747px;top:11.5px" width="32" height="14" viewBox="0 0 32 14"><path d="M1.700 1.100h7.200v4.200H1.700z" fill="#9ba6b2"/><path d="M1.500 12.800V1.200h7.500v4.300" fill="none" stroke="#5c6b7a" stroke-width="1"/><path d="M3 7h1.600" stroke="#5c6b7a" stroke-width="1"/><path d="M1 12.700h2.800" stroke="#5c6b7a" stroke-width="1.200"/><path d="M5.600 12.600l.600-2 3.500-3.500c.4-.4 1-.4 1.400 0l.2.200c.4.400.4 1 0 1.400l-3.500 3.500z" fill="#fff" stroke="#5c6b7a" stroke-width=".9"/><path d="M24.200 1.700h5.700v8.800h-5.700z" fill="none" stroke="#5c6b7a" stroke-width="1.100"/><path d="M24.400 1.500v9.200" stroke="#5c6b7a" stroke-width="1.500" opacity=".55"/><path d="M26.200 3.900h2.600M26.200 6.100h2.600M26.200 8.300h2.600" stroke="#5c6b7a" stroke-width=".8" opacity=".85"/><path d="M23.800 1.700h-4.800v3.700" fill="none" stroke="#5c6b7a" stroke-width="1" opacity=".85"/><path d="M18.800 11.500l3.100-3.100M19.900 8.200h2.200v2.200" fill="none" stroke="#5c6b7a" stroke-width="1"/></svg>
</div>
<div class="row" style="top:81px;height:44px">
<div class="c pn" style="left:10px">FEIPO072500814</div>
<div class="c lk" style="left:199px">001 Horse</div>
<div class="c gr" style="left:482px">Active</div>
<div class="c" style="left:614px">Endorsement</div>
<div class="c" style="left:803px">07 Jul 25</div>
<div class="c" style="left:973px">07 Jul 26</div>
<div class="c" style="left:1143px">Furlong Equine Insurance</div>
<div class="c r" style="left:1359px;width:179px">$19,800.00</div>
<div class="c r" style="left:1548px;width:179px">$1,808.49</div>
<svg class="abs" style="left:1747px;top:11.5px" width="32" height="14" viewBox="0 0 32 14"><path d="M1.700 1.100h7.200v4.200H1.700z" fill="#9ba6b2"/><path d="M1.500 12.800V1.200h7.500v4.300" fill="none" stroke="#5c6b7a" stroke-width="1"/><path d="M3 7h1.600" stroke="#5c6b7a" stroke-width="1"/><path d="M1 12.700h2.800" stroke="#5c6b7a" stroke-width="1.200"/><path d="M5.600 12.600l.600-2 3.500-3.500c.4-.4 1-.4 1.400 0l.2.200c.4.400.4 1 0 1.400l-3.500 3.500z" fill="#fff" stroke="#5c6b7a" stroke-width=".9"/><path d="M24.200 1.700h5.700v8.800h-5.700z" fill="none" stroke="#5c6b7a" stroke-width="1.100"/><path d="M24.400 1.500v9.200" stroke="#5c6b7a" stroke-width="1.500" opacity=".55"/><path d="M26.200 3.900h2.600M26.200 6.100h2.600M26.200 8.300h2.600" stroke="#5c6b7a" stroke-width=".8" opacity=".85"/><path d="M23.800 1.700h-4.800v3.700" fill="none" stroke="#5c6b7a" stroke-width="1" opacity=".85"/><path d="M18.800 11.500l3.100-3.100M19.900 8.200h2.200v2.200" fill="none" stroke="#5c6b7a" stroke-width="1"/></svg>
</div>
<div class="row" style="top:125px;height:43px">
<div class="c pn" style="left:10px">FEIPO072500815</div>
<div class="c lk" style="left:199px">001 Horse</div>
<div class="c gr" style="left:482px">Active</div>
<div class="c" style="left:614px">Endorsement</div>
<div class="c" style="left:803px">07 Jul 25</div>
<div class="c" style="left:973px">07 Jul 26</div>
<div class="c" style="left:1143px">Furlong Equine Insurance</div>
<div class="c r" style="left:1359px;width:179px">$3,840.00</div>
<div class="c r" style="left:1548px;width:179px">$2,510.40</div>
<svg class="abs" style="left:1747px;top:11.5px" width="32" height="14" viewBox="0 0 32 14"><path d="M1.700 1.100h7.200v4.200H1.700z" fill="#9ba6b2"/><path d="M1.500 12.800V1.200h7.500v4.300" fill="none" stroke="#5c6b7a" stroke-width="1"/><path d="M3 7h1.600" stroke="#5c6b7a" stroke-width="1"/><path d="M1 12.700h2.800" stroke="#5c6b7a" stroke-width="1.200"/><path d="M5.600 12.600l.600-2 3.500-3.500c.4-.4 1-.4 1.400 0l.2.200c.4.400.4 1 0 1.400l-3.500 3.500z" fill="#fff" stroke="#5c6b7a" stroke-width=".9"/><path d="M24.200 1.700h5.700v8.800h-5.700z" fill="none" stroke="#5c6b7a" stroke-width="1.100"/><path d="M24.400 1.500v9.200" stroke="#5c6b7a" stroke-width="1.500" opacity=".55"/><path d="M26.200 3.900h2.600M26.200 6.100h2.600M26.200 8.300h2.600" stroke="#5c6b7a" stroke-width=".8" opacity=".85"/><path d="M23.800 1.700h-4.800v3.700" fill="none" stroke="#5c6b7a" stroke-width="1" opacity=".85"/><path d="M18.800 11.500l3.100-3.100M19.900 8.200h2.200v2.200" fill="none" stroke="#5c6b7a" stroke-width="1"/></svg>
</div>
<div class="row" style="top:168px;height:43px">
<div class="c pn" style="left:10px">FEIPO012500170</div>
<div class="c lk" style="left:199px">002 Horse</div>
<div class="c gr" style="left:482px">Active</div>
<div class="c" style="left:614px">New</div>
<div class="c" style="left:803px">01 Feb 25</div>
<div class="c" style="left:973px">01 Feb 26</div>
<div class="c" style="left:1143px">Furlong Equine Insurance</div>
<div class="c r" style="left:1359px;width:179px">$330,880.00</div>
<div class="c r" style="left:1548px;width:179px">$14,448.19</div>
<svg class="abs" style="left:1747px;top:11.5px" width="32" height="14" viewBox="0 0 32 14"><path d="M1.700 1.100h7.200v4.200H1.700z" fill="#9ba6b2"/><path d="M1.500 12.800V1.200h7.500v4.300" fill="none" stroke="#5c6b7a" stroke-width="1"/><path d="M3 7h1.600" stroke="#5c6b7a" stroke-width="1"/><path d="M1 12.700h2.800" stroke="#5c6b7a" stroke-width="1.200"/><path d="M5.600 12.600l.600-2 3.500-3.500c.4-.4 1-.4 1.400 0l.2.200c.4.400.4 1 0 1.400l-3.500 3.500z" fill="#fff" stroke="#5c6b7a" stroke-width=".9"/><path d="M24.200 1.700h5.700v8.800h-5.700z" fill="none" stroke="#5c6b7a" stroke-width="1.100"/><path d="M24.400 1.500v9.200" stroke="#5c6b7a" stroke-width="1.500" opacity=".55"/><path d="M26.200 3.900h2.600M26.200 6.100h2.600M26.200 8.300h2.600" stroke="#5c6b7a" stroke-width=".8" opacity=".85"/><path d="M23.800 1.700h-4.800v3.700" fill="none" stroke="#5c6b7a" stroke-width="1" opacity=".85"/><path d="M18.800 11.500l3.100-3.100M19.900 8.200h2.200v2.200" fill="none" stroke="#5c6b7a" stroke-width="1"/></svg>
</div>
<div class="row" style="top:211px;height:43px">
<div class="c pn" style="left:10px">123</div>
<div class="c lk" style="left:199px">A foal</div>
<div class="c gr" style="left:482px">Active</div>
<div class="c" style="left:614px">Manual Input</div>
<div class="c" style="left:803px">06 Jul 25</div>
<div class="c" style="left:973px">06 Jul 26</div>
<div class="c" style="left:1143px">Example Provider</div>
<div class="c r" style="left:1359px;width:179px">$25,000.00</div>
<div class="c r" style="left:1548px;width:179px">$8,000.00</div>
<svg class="abs" style="left:1746px;top:12px" width="64" height="14" viewBox="0 0 64 14"><path d="M3.200 9.200L10 2.200c.4-.4 1-.4 1.400 0l.8.800c.4.400.4 1 0 1.400L5.400 11.200l-2.600.4z" fill="#fff" stroke="#5c6b7a" stroke-width="1"/><path d="M1.500 12.500h12" stroke="#5c6b7a" stroke-width="1.100"/><path d="M21.600 2v4.500M24 2.200v5h-1.500" fill="none" stroke="#5c6b7a" stroke-width="1.100"/><path d="M25.500 2.500h3.800c.6 0 1 .4 1 1v7.700c0 .6-.4 1-1 1h-4.600c-.6 0-1-.4-1-1V9.700" fill="none" stroke="#5c6b7a" stroke-width="1" opacity=".75"/><path d="M26.300 5v4.500M27.500 4.500v5M28.600 5v4.500" stroke="#5c6b7a" stroke-width=".7" opacity=".7"/><path d="M38.500 1.700h8c.6 0 1 .4 1 1v6l-2.700 2.700h-6.300c-.6 0-1-.4-1-1V2.700c0-.6.400-1 1-1z" fill="none" stroke="#5c6b7a" stroke-width="1.100"/><path d="M47.400 8.700h-1.600c-.6 0-1 .4-1 1v1.600" fill="none" stroke="#5c6b7a" stroke-width=".9"/><path d="M52.200 3.400h9.600M55.600 3.200c0-1 .6-1.600 1.400-1.600s1.400.6 1.400 1.600" fill="none" stroke="#5c6b7a" stroke-width="1.100"/><path d="M53.300 3.800l.4 7c0 .6.400 1 1 1h4.600c.6 0 1-.4 1-1l.4-7" fill="none" stroke="#5c6b7a" stroke-width="1.100"/><path d="M55.800 5.500v4.500M58.200 5.500v4.500" stroke="#5c6b7a" stroke-width="1.100"/></svg>
</div>
<div class="row" style="top:254px;height:44px">
<div class="c pn" style="left:10px">FEIPO042500696</div>
<div class="c lk" style="left:199px">American Beauty</div>
<div class="c gr" style="left:482px">Active</div>
<div class="c" style="left:614px">New</div>
<div class="c" style="left:803px">11 Feb 25</div>
<div class="c" style="left:973px">11 Feb 26</div>
<div class="c" style="left:1143px">Furlong Equine Insurance</div>
<div class="c r" style="left:1359px;width:179px">$8,500.00</div>
<div class="c r" style="left:1548px;width:179px">$1,397.51</div>
<svg class="abs" style="left:1747px;top:11.5px" width="32" height="14" viewBox="0 0 32 14"><path d="M1.700 1.100h7.200v4.200H1.700z" fill="#9ba6b2"/><path d="M1.500 12.800V1.200h7.500v4.300" fill="none" stroke="#5c6b7a" stroke-width="1"/><path d="M3 7h1.600" stroke="#5c6b7a" stroke-width="1"/><path d="M1 12.700h2.800" stroke="#5c6b7a" stroke-width="1.200"/><path d="M5.600 12.600l.600-2 3.500-3.500c.4-.4 1-.4 1.400 0l.2.200c.4.400.4 1 0 1.400l-3.500 3.500z" fill="#fff" stroke="#5c6b7a" stroke-width=".9"/><path d="M24.200 1.700h5.700v8.800h-5.700z" fill="none" stroke="#5c6b7a" stroke-width="1.100"/><path d="M24.400 1.500v9.200" stroke="#5c6b7a" stroke-width="1.500" opacity=".55"/><path d="M26.200 3.900h2.600M26.200 6.100h2.600M26.200 8.300h2.600" stroke="#5c6b7a" stroke-width=".8" opacity=".85"/><path d="M23.800 1.700h-4.800v3.700" fill="none" stroke="#5c6b7a" stroke-width="1" opacity=".85"/><path d="M18.800 11.500l3.100-3.100M19.900 8.200h2.200v2.200" fill="none" stroke="#5c6b7a" stroke-width="1"/></svg>
</div>
<div class="detail" style="top:298px;height:94px">
<div class="inner"><div class="ih">
<div class="c" style="left:10px">Quotation Number</div>
<div class="c" style="left:265px">Status</div>
<div class="c" style="left:519px">Start Date</div>
<div class="c" style="left:774px">End Date</div>
<div class="c r" style="left:1019px;width:244px">Premium</div>
<div class="c" style="left:1283px">Invoice Status</div>
<div class="c" style="left:1453px">Actions</div>
<div class="vd" style="left:255px;top:24px;height:15px;background:#dfe8ee"></div>
<div class="vd" style="left:509px;top:24px;height:15px;background:#dfe8ee"></div>
<div class="vd" style="left:764px;top:24px;height:15px;background:#dfe8ee"></div>
<div class="vd" style="left:1019px;top:24px;height:15px;background:#dfe8ee"></div>
<div class="vd" style="left:1273px;top:24px;height:15px;background:#dfe8ee"></div>
<div class="vd" style="left:1443px;top:24px;height:15px;background:#dfe8ee"></div>
</div><div class="ir">
<div class="c pn" style="left:10px">FEIQU022501924</div>
<div class="c" style="left:265px">Active</div>
<div class="c" style="left:519px">11 Feb 25</div>
<div class="c" style="left:774px">11 Feb 26</div>
<div class="c r" style="left:1019px;width:244px">$1,397.51</div>
<div class="c gr" style="left:1283px">Invoiced</div>
<svg class="abs" style="left:1452px;top:45px" width="30" height="18" viewBox="0 0 30 18"><path d="M1.500 11.200C3.300 8.400 5.500 7 8 7s4.700 1.400 6.500 4.200C12.700 14 10.500 15.400 8 15.400S3.300 14 1.500 11.200z" fill="none" stroke="#a9adb1" stroke-width=".9"/><circle cx="8" cy="11.200" r="2.300" fill="none" stroke="#a9adb1" stroke-width=".9"/><path d="M8 10v2.400" stroke="#a9adb1" stroke-width=".8"/><text x="21.800" y="14.400" text-anchor="middle" font-family="Liberation Sans,Arial,sans-serif" font-size="13" fill="#45c534">$</text></svg>
</div></div></div>
<div class="row" style="top:392px;height:43px">
<div class="c pn" style="left:10px">FEIPO012500168</div>
<div class="c lk" style="left:199px">Big Girl</div>
<div class="c gr" style="left:482px">Active</div>
<div class="c" style="left:614px">New</div>
<div class="c" style="left:803px">17 Jan 25</div>
<div class="c" style="left:973px">17 Jan 26</div>
<div class="c" style="left:1143px">Furlong Equine Insurance</div>
<div class="c r" style="left:1359px;width:179px">$18,000.00</div>
<div class="c r" style="left:1548px;width:179px">$12,222.00</div>
<svg class="abs" style="left:1747px;top:11.5px" width="32" height="14" viewBox="0 0 32 14"><path d="M1.700 1.100h7.200v4.200H1.700z" fill="#9ba6b2"/><path d="M1.500 12.800V1.200h7.500v4.300" fill="none" stroke="#5c6b7a" stroke-width="1"/><path d="M3 7h1.600" stroke="#5c6b7a" stroke-width="1"/><path d="M1 12.700h2.800" stroke="#5c6b7a" stroke-width="1.200"/><path d="M5.600 12.600l.600-2 3.500-3.500c.4-.4 1-.4 1.400 0l.2.200c.4.400.4 1 0 1.400l-3.500 3.500z" fill="#fff" stroke="#5c6b7a" stroke-width=".9"/><path d="M24.200 1.700h5.700v8.800h-5.700z" fill="none" stroke="#5c6b7a" stroke-width="1.100"/><path d="M24.400 1.500v9.200" stroke="#5c6b7a" stroke-width="1.500" opacity=".55"/><path d="M26.200 3.900h2.600M26.200 6.100h2.600M26.200 8.300h2.600" stroke="#5c6b7a" stroke-width=".8" opacity=".85"/><path d="M23.800 1.700h-4.800v3.700" fill="none" stroke="#5c6b7a" stroke-width="1" opacity=".85"/><path d="M18.800 11.500l3.100-3.100M19.900 8.200h2.200v2.200" fill="none" stroke="#5c6b7a" stroke-width="1"/></svg>
</div>
<div class="detail" style="top:435px;height:94px">
<div class="inner"><div class="ih">
<div class="c" style="left:10px">Quotation Number</div>
<div class="c" style="left:265px">Status</div>
<div class="c" style="left:519px">Start Date</div>
<div class="c" style="left:774px">End Date</div>
<div class="c r" style="left:1019px;width:244px">Premium</div>
<div class="c" style="left:1283px">Invoice Status</div>
<div class="c" style="left:1453px">Actions</div>
<div class="vd" style="left:255px;top:24px;height:15px;background:#dfe8ee"></div>
<div class="vd" style="left:509px;top:24px;height:15px;background:#dfe8ee"></div>
<div class="vd" style="left:764px;top:24px;height:15px;background:#dfe8ee"></div>
<div class="vd" style="left:1019px;top:24px;height:15px;background:#dfe8ee"></div>
<div class="vd" style="left:1273px;top:24px;height:15px;background:#dfe8ee"></div>
<div class="vd" style="left:1443px;top:24px;height:15px;background:#dfe8ee"></div>
</div><div class="ir">
<div class="c pn" style="left:10px">FEIQU012501648</div>
<div class="c" style="left:265px">Active</div>
<div class="c" style="left:519px">17 Jan 25</div>
<div class="c" style="left:774px">17 Jan 26</div>
<div class="c r" style="left:1019px;width:244px">$2,037.00</div>
<div class="c" style="left:1283px">N/A</div>
<svg class="abs" style="left:1452px;top:45px" width="30" height="18" viewBox="0 0 30 18"><path d="M1.500 11.200C3.300 8.400 5.500 7 8 7s4.700 1.400 6.500 4.200C12.700 14 10.500 15.400 8 15.400S3.300 14 1.500 11.200z" fill="none" stroke="#a9adb1" stroke-width=".9"/><circle cx="8" cy="11.200" r="2.300" fill="none" stroke="#a9adb1" stroke-width=".9"/><path d="M8 10v2.400" stroke="#a9adb1" stroke-width=".8"/><text x="21.800" y="14.400" text-anchor="middle" font-family="Liberation Sans,Arial,sans-serif" font-size="13" fill="#9aa0a6">$</text></svg>
</div></div></div>
<div class="row" style="top:529px;height:43px">
<div class="c pn" style="left:10px">FEIPO012500166</div>
<div class="c lk" style="left:199px">Dr Remlap</div>
<div class="c gr" style="left:482px">Active</div>
<div class="c" style="left:614px">New</div>
<div class="c" style="left:803px">17 Jan 25</div>
<div class="c" style="left:973px">17 Jan 26</div>
<div class="c" style="left:1143px">Furlong Equine Insurance</div>
<div class="c r" style="left:1359px;width:179px">$65,000.00</div>
<div class="c r" style="left:1548px;width:179px">$4,103.00</div>
<svg class="abs" style="left:1747px;top:11.5px" width="32" height="14" viewBox="0 0 32 14"><path d="M1.700 1.100h7.200v4.200H1.700z" fill="#9ba6b2"/><path d="M1.500 12.800V1.200h7.500v4.300" fill="none" stroke="#5c6b7a" stroke-width="1"/><path d="M3 7h1.600" stroke="#5c6b7a" stroke-width="1"/><path d="M1 12.700h2.800" stroke="#5c6b7a" stroke-width="1.200"/><path d="M5.600 12.600l.600-2 3.500-3.500c.4-.4 1-.4 1.400 0l.2.200c.4.400.4 1 0 1.400l-3.500 3.500z" fill="#fff" stroke="#5c6b7a" stroke-width=".9"/><path d="M24.200 1.700h5.700v8.800h-5.700z" fill="none" stroke="#5c6b7a" stroke-width="1.100"/><path d="M24.400 1.500v9.200" stroke="#5c6b7a" stroke-width="1.500" opacity=".55"/><path d="M26.200 3.900h2.600M26.200 6.100h2.600M26.200 8.300h2.600" stroke="#5c6b7a" stroke-width=".8" opacity=".85"/><path d="M23.800 1.700h-4.800v3.700" fill="none" stroke="#5c6b7a" stroke-width="1" opacity=".85"/><path d="M18.800 11.500l3.100-3.100M19.900 8.200h2.200v2.200" fill="none" stroke="#5c6b7a" stroke-width="1"/></svg>
</div>
<div class="row" style="top:572px;height:44px">
<div class="c pn" style="left:10px">FEIPO012500165</div>
<div class="c lk" style="left:199px">Hidden Wonder</div>
<div class="c gr" style="left:482px">Active</div>
<div class="c" style="left:614px">New</div>
<div class="c" style="left:803px">17 Jan 25</div>
<div class="c" style="left:973px">17 Jan 26</div>
<div class="c" style="left:1143px">Furlong Equine Insurance</div>
<div class="c r" style="left:1359px;width:179px">$86,000.00</div>
<div class="c r" style="left:1548px;width:179px">$4,901.87</div>
<svg class="abs" style="left:1747px;top:11.5px" width="32" height="14" viewBox="0 0 32 14"><path d="M1.700 1.100h7.200v4.200H1.700z" fill="#9ba6b2"/><path d="M1.500 12.800V1.200h7.500v4.300" fill="none" stroke="#5c6b7a" stroke-width="1"/><path d="M3 7h1.600" stroke="#5c6b7a" stroke-width="1"/><path d="M1 12.700h2.800" stroke="#5c6b7a" stroke-width="1.200"/><path d="M5.600 12.600l.600-2 3.500-3.500c.4-.4 1-.4 1.400 0l.2.200c.4.400.4 1 0 1.400l-3.500 3.500z" fill="#fff" stroke="#5c6b7a" stroke-width=".9"/><path d="M24.200 1.700h5.700v8.800h-5.700z" fill="none" stroke="#5c6b7a" stroke-width="1.100"/><path d="M24.400 1.500v9.200" stroke="#5c6b7a" stroke-width="1.500" opacity=".55"/><path d="M26.200 3.900h2.600M26.200 6.100h2.600M26.200 8.300h2.600" stroke="#5c6b7a" stroke-width=".8" opacity=".85"/><path d="M23.800 1.700h-4.800v3.700" fill="none" stroke="#5c6b7a" stroke-width="1" opacity=".85"/><path d="M18.800 11.500l3.100-3.100M19.900 8.200h2.200v2.200" fill="none" stroke="#5c6b7a" stroke-width="1"/></svg>
</div>
<div class="row" style="top:616px;height:43px">
<div class="c pn" style="left:10px">FEIPO012500164</div>
<div class="c lk" style="left:199px">Himlen</div>
<div class="c gr" style="left:482px">Active</div>
<div class="c" style="left:614px">New</div>
<div class="c" style="left:803px">17 Jan 25</div>
<div class="c" style="left:973px">17 Jan 26</div>
<div class="c" style="left:1143px">Furlong Equine Insurance</div>
<div class="c r" style="left:1359px;width:179px">$46,800.00</div>
<div class="c r" style="left:1548px;width:179px">$2,668.80</div>
<svg class="abs" style="left:1747px;top:11.5px" width="32" height="14" viewBox="0 0 32 14"><path d="M1.700 1.100h7.200v4.200H1.700z" fill="#9ba6b2"/><path d="M1.500 12.800V1.200h7.500v4.300" fill="none" stroke="#5c6b7a" stroke-width="1"/><path d="M3 7h1.600" stroke="#5c6b7a" stroke-width="1"/><path d="M1 12.700h2.800" stroke="#5c6b7a" stroke-width="1.200"/><path d="M5.600 12.600l.600-2 3.500-3.500c.4-.4 1-.4 1.400 0l.2.200c.4.400.4 1 0 1.400l-3.500 3.500z" fill="#fff" stroke="#5c6b7a" stroke-width=".9"/><path d="M24.200 1.700h5.700v8.800h-5.700z" fill="none" stroke="#5c6b7a" stroke-width="1.100"/><path d="M24.400 1.500v9.200" stroke="#5c6b7a" stroke-width="1.500" opacity=".55"/><path d="M26.200 3.900h2.600M26.200 6.100h2.600M26.200 8.300h2.600" stroke="#5c6b7a" stroke-width=".8" opacity=".85"/><path d="M23.800 1.700h-4.800v3.700" fill="none" stroke="#5c6b7a" stroke-width="1" opacity=".85"/><path d="M18.800 11.500l3.100-3.100M19.900 8.200h2.200v2.200" fill="none" stroke="#5c6b7a" stroke-width="1"/></svg>
</div>
<div class="row" style="top:659px;height:43px">
<div class="c pn" style="left:10px">FEIPO012500169</div>
<div class="c lk" style="left:199px">Lady Pachira</div>
<div class="c gr" style="left:482px">Active</div>
<div class="c" style="left:614px">New</div>
<div class="c" style="left:803px">17 Jan 25</div>
<div class="c" style="left:973px">17 Jan 26</div>
<div class="c" style="left:1143px">Furlong Equine Insurance</div>
<div class="c r" style="left:1359px;width:179px">$56,000.00</div>
<div class="c r" style="left:1548px;width:179px">$3,009.80</div>
<svg class="abs" style="left:1747px;top:11.5px" width="32" height="14" viewBox="0 0 32 14"><path d="M1.700 1.100h7.200v4.200H1.700z" fill="#9ba6b2"/><path d="M1.500 12.800V1.200h7.500v4.300" fill="none" stroke="#5c6b7a" stroke-width="1"/><path d="M3 7h1.600" stroke="#5c6b7a" stroke-width="1"/><path d="M1 12.700h2.800" stroke="#5c6b7a" stroke-width="1.200"/><path d="M5.600 12.600l.600-2 3.500-3.500c.4-.4 1-.4 1.400 0l.2.200c.4.400.4 1 0 1.400l-3.500 3.500z" fill="#fff" stroke="#5c6b7a" stroke-width=".9"/><path d="M24.200 1.700h5.700v8.800h-5.700z" fill="none" stroke="#5c6b7a" stroke-width="1.100"/><path d="M24.400 1.500v9.200" stroke="#5c6b7a" stroke-width="1.500" opacity=".55"/><path d="M26.200 3.900h2.600M26.200 6.100h2.600M26.200 8.300h2.600" stroke="#5c6b7a" stroke-width=".8" opacity=".85"/><path d="M23.800 1.700h-4.800v3.700" fill="none" stroke="#5c6b7a" stroke-width="1" opacity=".85"/><path d="M18.800 11.500l3.100-3.100M19.900 8.200h2.200v2.200" fill="none" stroke="#5c6b7a" stroke-width="1"/></svg>
</div>
<div class="row" style="top:702px;height:44px">
<div class="c pn" style="left:10px">FEIPO122400159</div>
<div class="c lk" style="left:199px">new horse 1</div>
<div class="c gr" style="left:482px">Active</div>
<div class="c" style="left:614px">New</div>
<div class="c" style="left:803px">18 Dec 24</div>
<div class="c" style="left:973px">18 Dec 25</div>
<div class="c" style="left:1143px">Furlong Equine Insurance</div>
<div class="c r" style="left:1359px;width:179px">$33,750.00</div>
<div class="c r" style="left:1548px;width:179px">$330.00</div>
<svg class="abs" style="left:1747px;top:11.5px" width="32" height="14" viewBox="0 0 32 14"><path d="M1.700 1.100h7.200v4.200H1.700z" fill="#9ba6b2"/><path d="M1.500 12.800V1.200h7.500v4.300" fill="none" stroke="#5c6b7a" stroke-width="1"/><path d="M3 7h1.600" stroke="#5c6b7a" stroke-width="1"/><path d="M1 12.700h2.800" stroke="#5c6b7a" stroke-width="1.200"/><path d="M5.600 12.600l.600-2 3.500-3.500c.4-.4 1-.4 1.400 0l.2.200c.4.400.4 1 0 1.400l-3.500 3.500z" fill="#fff" stroke="#5c6b7a" stroke-width=".9"/><path d="M24.200 1.700h5.700v8.800h-5.700z" fill="none" stroke="#5c6b7a" stroke-width="1.100"/><path d="M24.400 1.500v9.200" stroke="#5c6b7a" stroke-width="1.500" opacity=".55"/><path d="M26.200 3.900h2.600M26.200 6.100h2.600M26.200 8.300h2.600" stroke="#5c6b7a" stroke-width=".8" opacity=".85"/><path d="M23.800 1.700h-4.800v3.700" fill="none" stroke="#5c6b7a" stroke-width="1" opacity=".85"/><path d="M18.800 11.500l3.100-3.100M19.900 8.200h2.200v2.200" fill="none" stroke="#5c6b7a" stroke-width="1"/></svg>
</div>
</div>
<div class="red" style="left:1377px;top:465px;width:129px;height:94px"></div>
<div class="red" style="left:1378px;top:599px;width:126px;height:98px"></div>
<div class="abs" style="left:1896px;top:413px;width:23px;height:58px;background:#777"><div class="abs" style="left:-16.500px;top:21px;width:58px;height:16px;line-height:16px;text-align:center;color:#fff;font-size:10.500px;letter-spacing:.2px;transform:rotate(-90deg);white-space:nowrap">Support</div></div><div class="abs" style="left:1790px;top:881px;width:40px;height:40px;border-radius:50%;background:#fff;box-shadow:0 3px 6px rgba(0,0,0,.28),0 1px 3px rgba(0,0,0,.12)"><div class="abs" style="left:10px;top:10px;width:20px;height:20px;border:2px solid #2196f3;border-radius:50%;color:#2196f3;font-weight:bold;font-size:15px;line-height:16px;text-align:center">?</div></div><div class="abs" style="left:1850px;top:878px;width:45px;height:45px;border-radius:50%;background:#44cc33;box-shadow:0 3px 6px rgba(0,0,0,.3),0 1px 3px rgba(0,0,0,.15)"><div class="abs" style="left:15px;top:21px;width:15px;height:3px;background:#fff"></div><div class="abs" style="left:21px;top:15px;width:3px;height:15px;background:#fff"></div><span style="position:absolute;left:0;top:0;width:45px;text-align:center;line-height:45px;font-size:1px;color:#44cc33">+</span></div>
</body></html>
